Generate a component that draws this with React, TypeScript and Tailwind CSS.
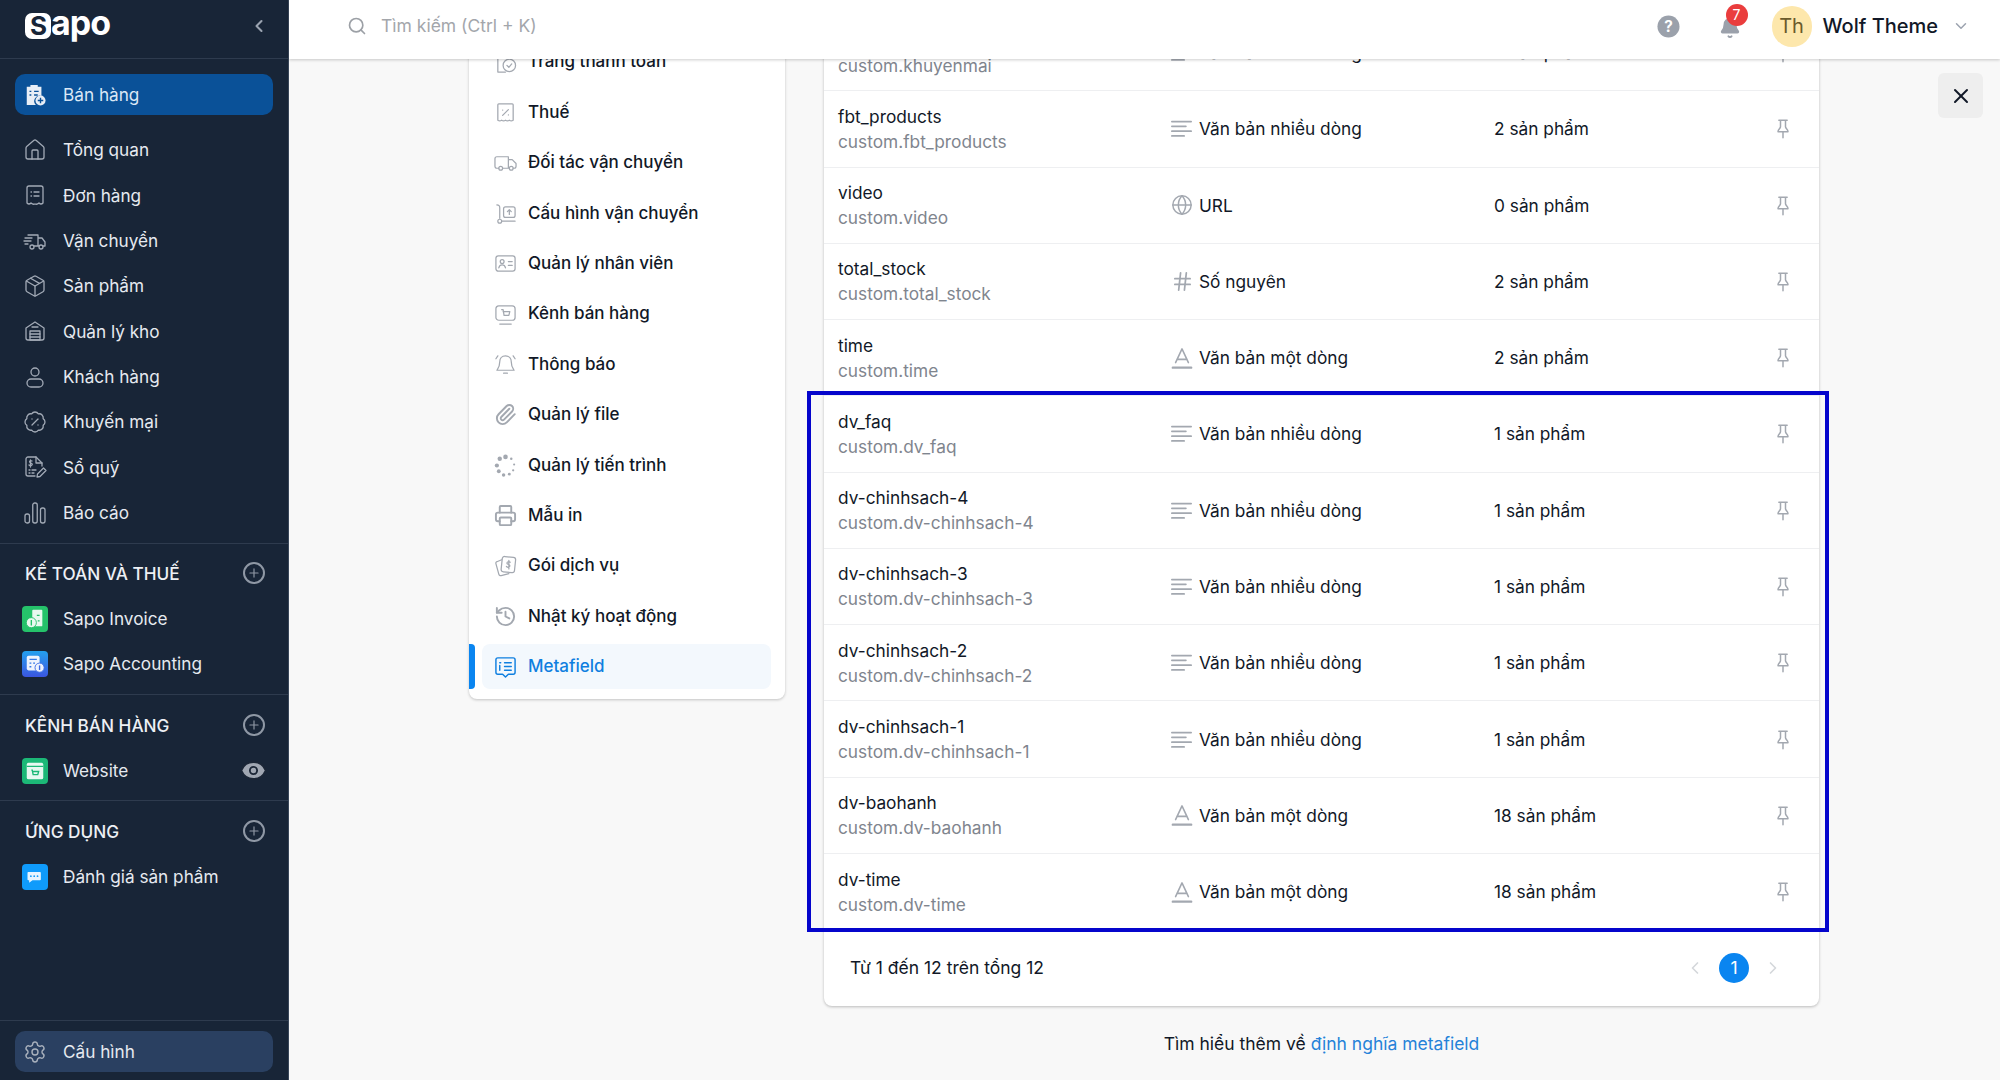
import React from "react";
import { BadgePercent, ChevronDown, ChevronLeft, ChevronRight, Eye, Globe, Hash, House, Package, Plus, Printer, Search, Settings, X, History, Paperclip, Bell } from "lucide-react";

type P = { className?: string };
const S = ({ className, children, sw = 1.3 }: P & { children: React.ReactNode; sw?: number }) => (
  <svg viewBox="0 0 24 24" fill="none" stroke="currentColor" strokeWidth={sw} strokeLinecap="round" strokeLinejoin="round" className={className}>{children}</svg>
);
const Receipt = (p: P) => <S {...p}><path d="M4 5a2 2 0 0 1 2-2h12a2 2 0 0 1 2 2v15c-1.5 1.5-2.5 1.5-4 0-1.5 1.5-2.500 1.500-4 1-1.500.5-2.500.5-4-1-1.500 1.500-2.500 1.500-4 0z" /><path d="M8 9h.5M11 9h5M8 13h.5M11 13h5" /></S>;
const FastTruck = (p: P) => <S {...p}><path d="M5 6h10v11h-4M15 9h4l3 4v4h-2M15 17h1" /><circle cx="9" cy="18" r="2" /><circle cx="18" cy="18" r="2" /><path d="M2 9h7M1 12h7M2 15h3" /></S>;
const Store = (p: P) => <S {...p}><path d="M3 9l9-6 9 6v10a2 2 0 0 1-2 2H5a2 2 0 0 1-2-2z" /><rect x="7" y="12" width="10" height="9" /><path d="M7 15h10M7 18h10M9 8h6" /></S>;
const Person = (p: P) => <S {...p}><circle cx="12" cy="7" r="4" /><rect x="4" y="14" width="16" height="8" rx="4" /></S>;
const Cash = (p: P) => <S {...p}><path d="M12 21H5a2 2 0 0 1-2-2V4a2 2 0 0 1 2-2h8l6 6v3" /><path d="M13 2v6h6M9 6c-2-1-3 .5-2 1.500s3 1 2 2.500-2.500.5-3 0M7.500 5v7M6 15h1M9 15h4M6 18h1M9 18h2" /><path d="M14 22l.5-3 6-6 2.500 2.500-6 6z" /></S>;
const Bars = (p: P) => <S {...p}><rect x="2" y="13" width="4.500" height="9" rx="2" /><rect x="9.750" y="2" width="4.500" height="20" rx="2" /><rect x="17.500" y="7" width="4.500" height="15" rx="2" /></S>;
const ThanhToan = (p: P) => <S {...p}><path d="M12 22H4V4" /><circle cx="16" cy="15" r="6.500" /><path d="M13.500 15l2 2 3-3.500" /></S>;
const Tax = (p: P) => <S {...p}><path d="M4 4a1 1 0 0 1 1-1h14a1 1 0 0 1 1 1v16c-1.500 1-2.500 1-4 0-1.500 1-2.500 1-4 0-1.500 1-2.500 1-4 0-1.500 1-2.500 1-4 0z" /><path d="M9 15l6-6M9 9.500h.1M15 14.500h.1" /></S>;
const Truck2 = (p: P) => <S {...p}><path d="M5 18H3a2 2 0 0 1-2-2V8a2 2 0 0 1 2-2h12v12H9M15 9h4l4 4v3a2 2 0 0 1-2 2h-1M15 18h1" /><circle cx="7" cy="18" r="2" /><circle cx="18" cy="18" r="2" /></S>;
const Cart = (p: P) => <S {...p}><path d="M3 3c2 0 3 1 3 3v11" /><circle cx="6" cy="20" r="2" /><path d="M8 20h14" /><rect x="10" y="5" width="12" height="11" rx="2" /><path d="M16 13V8M14 10l2-2 2 2" /></S>;
const IdCard = (p: P) => <S {...p}><rect x="2" y="4" width="20" height="16" rx="2.500" /><circle cx="8.500" cy="10" r="2" /><path d="M5 16.500c.5-2 2-3 3.500-3s3 1 3.500 3M15 10h4M15 14h4" /></S>;
const Monitor = (p: P) => <S {...p}><rect x="2" y="3" width="20" height="15" rx="3" /><path d="M6 22h12M8 7h1.500l1 6h5l1-4h-7" /></S>;
const BellO = (p: P) => <S {...p}><path d="M12 3c4 0 6 3 6 6 0 5 1 6 3 9H3c2-3 3-4 3-9 0-3 2-6 6-6zM10 21h4M4 3L2 6M20 3l2 3" /></S>;
const Spinner = (p: P) => (
  <svg viewBox="0 0 24 24" fill="currentColor" className={p.className}><circle cx="12" cy="3" r="2.400" /><circle cx="18" cy="5" r="1.300" /><circle cx="21" cy="11" r="1.100" /><circle cx="20" cy="17" r="1.200" /><circle cx="16" cy="21" r="1.500" /><circle cx="10" cy="22" r="1.800" /><circle cx="5" cy="18" r="2" /><circle cx="3" cy="12" r="2.200" /><circle cx="6" cy="5" r="2.300" /></svg>
);
const Plans = (p: P) => <S {...p}><rect x="8" y="2" width="14" height="16" rx="2.500" transform="rotate(6 15 10)" /><path d="M8 5L3 7a1.500 1.500 0 0 0-1 2l3 11a2 2 0 0 0 2.500 1.500l8-2" /><path d="M17 7.500c-1.500-1-3.500-.5-3.500 1s3.500 1 3 3-2.500 1.500-3.500.5M15.500 5.500v9" /></S>;
const MetaI = (p: P) => <S {...p} sw={1.500}><path d="M4 3h16a2 2 0 0 1 2 2v13a2 2 0 0 1-2 2h-5l-3 3-3-3H4a2 2 0 0 1-2-2V5a2 2 0 0 1 2-2z" /><path d="M6 8h1M6 11v5M11 8h7M11 12h7M11 16h7" /></S>;
const Lines = (p: P) => <S {...p} sw={2}><path d="M1 4h22M1 9.500h16M1 15h22M1 20.500h14" /></S>;
const AType = (p: P) => <S {...p} sw={1.700}><path d="M5 17L12 2l7 15M6.500 13.500h11" /><path strokeWidth={2.600} d="M2 22.500h20" /></S>;
const ThickPin = (p: P) => <S {...p} sw={1.800}><path d="M7 2h10M9 2v8c0 2-3 3-3 6h12c0-3-3-4-3-6V2M12 16v7" /></S>;

const side: [string, (p: P) => React.ReactNode][] = [
  ["Tổng quan", House], ["Đơn hàng", Receipt], ["Vận chuyển", FastTruck], ["Sản phẩm", Package], ["Quản lý kho", Store],
  ["Khách hàng", Person], ["Khuyến mại", BadgePercent], ["Sổ quỹ", Cash], ["Báo cáo", Bars],
];
const settings: [string, (p: P) => React.ReactNode][] = [
  ["Trang thanh toán", ThanhToan], ["Thuế", Tax], ["Đối tác vận chuyển", Truck2], ["Cấu hình vận chuyển", Cart], ["Quản lý nhân viên", IdCard],
  ["Kênh bán hàng", Monitor], ["Thông báo", BellO], ["Quản lý file", Paperclip], ["Quản lý tiến trình", Spinner], ["Mẫu in", Printer],
  ["Gói dịch vụ", Plans], ["Nhật ký hoạt động", History],
];
const ML = "Văn bản nhiều dòng", SL = "Văn bản một dòng";
const rows: [string, string, string, string][] = [
  ["khuyenmai", "custom.khuyenmai", ML, "0 sản phẩm"],
  ["fbt_products", "custom.fbt_products", ML, "2 sản phẩm"],
  ["video", "custom.video", "URL", "0 sản phẩm"],
  ["total_stock", "custom.total_stock", "Số nguyên", "2 sản phẩm"],
  ["time", "custom.time", SL, "2 sản phẩm"],
  ["dv_faq", "custom.dv_faq", ML, "1 sản phẩm"],
  ["dv-chinhsach-4", "custom.dv-chinhsach-4", ML, "1 sản phẩm"],
  ["dv-chinhsach-3", "custom.dv-chinhsach-3", ML, "1 sản phẩm"],
  ["dv-chinhsach-2", "custom.dv-chinhsach-2", ML, "1 sản phẩm"],
  ["dv-chinhsach-1", "custom.dv-chinhsach-1", ML, "1 sản phẩm"],
  ["dv-baohanh", "custom.dv-baohanh", SL, "18 sản phẩm"],
  ["dv-time", "custom.dv-time", SL, "18 sản phẩm"],
];
const TypeIcon = ({ t }: { t: string }) => {
  if (t === ML) return <Lines className="w-[21px] h-[21px] text-[#a3a8b0]" />;
  if (t === SL) return <AType className="w-[22px] h-[22px] text-[#a3a8b0]" />;
  if (t === "URL") return <Globe className="w-[22px] h-[22px] text-[#a3a8b0]" strokeWidth={1.600} />;
  return <Hash className="w-[23px] h-[23px] text-[#a3a8b0]" strokeWidth={1.800} />;
};

const Row = ({ label, icon: I }: { label: string; icon: (p: P & { strokeWidth?: number }) => React.ReactNode }) => (
  <div className="h-[45.330px] flex items-center">
    <span className="w-[63px] pl-[23px] shrink-0"><I className="w-[24px] h-[24px] text-[#a2aab6]" strokeWidth={1.300} /></span>
    <span>{label}</span>
  </div>
);
const Section = ({ title }: { title: string }) => (
  <div className="flex items-center justify-between pl-[25px] pr-[23px] h-[30px] font-medium text-[#edf0f4]">
    <span>{title}</span>
    <span className="w-[22px] h-[22px] rounded-full border-2 border-[#8f98a5] flex items-center justify-center"><Plus className="w-[14px] h-[14px] text-[#8f98a5]" strokeWidth={2} /></span>
  </div>
);
const Tile = ({ className, children }: { className: string; children: React.ReactNode }) => (
  <span className={`w-[26px] h-[26px] rounded-[4px] flex items-center justify-center ${className}`}>{children}</span>
);
const AppRow = ({ label, tile, children }: { label: string; tile: string; children: React.ReactNode }) => (
  <div className="h-[45px] flex items-center">
    <span className="w-[63px] pl-[22px] shrink-0"><Tile className={tile}>{children}</Tile></span>
    <span>{label}</span>
  </div>
);

export default function App() {
  return (
    <div className="relative w-[2000px] h-[1080px] flex overflow-hidden bg-[#f8f8f8] text-[17.500px] text-[#111827]" style={{ fontFamily: "Inter, sans-serif" }}>
      <aside className="w-[289px] shrink-0 bg-[#182537] text-[#e6eaf0] text-[17.200px] flex flex-col border-r border-[#39475a]">
        <div className="h-[59px] shrink-0 flex items-center justify-between pl-[25px] pr-[19px] pb-[7px] border-b border-[#2e3b4e]">
          <div className="flex items-center text-white font-bold text-[34px] leading-none tracking-[-1px]">
            <span className="w-[26px] h-[26px] bg-white rounded-[7px] text-[#182537] text-[26px] flex items-center justify-center">S</span>
            <span className="-mt-[5px]">apo</span>
          </div>
          <ChevronLeft className="w-[20px] h-[20px] text-[#9aa3b0]" strokeWidth={2.500} />
        </div>
        <div className="mx-[15px] mt-[15px] mb-[12.500px] h-[41px] rounded-[10px] bg-[#0a5198] flex items-center shrink-0">
          <span className="w-[48px] pl-[9px] shrink-0">
            <svg viewBox="0 0 24 24" className="w-[22px] h-[24px]"><path fill="#e8eef6" d="M3 3h4V1h8v2h4v10a6 6 0 0 0-6 10H3z" /><circle cx="18" cy="18" r="5.500" fill="#e8eef6" /><path stroke="#0a5198" strokeWidth="1.500" d="M18 15v6M15 18h6M6 8h2M6 12h2M11 8h5M11 12h4" /></svg>
          </span>
          <span className="text-[#dbe8f6]">Bán hàng</span>
        </div>
        {side.map(([l, I]) => <Row key={l} label={l} icon={I as never} />)}
        <div className="border-t border-[#2e3b4e] mt-[8px] pt-[14px] pb-[2px]">
          <Section title="KẾ TOÁN VÀ THUẾ" />
          <div className="mt-[8px]">
            <AppRow label="Sapo Invoice" tile="bg-[#25c26a]">
              <svg viewBox="0 0 24 24" className="w-[22px] h-[22px]"><rect x="9" y="2" width="11" height="18" rx="1" fill="#e9f9ef" /><circle cx="8" cy="16" r="5.500" fill="#e9f9ef" stroke="#25c26a" /><path stroke="#25c26a" strokeWidth="1.500" d="M8 13v6M14 8h3M15 14h2" /></svg>
            </AppRow>
            <AppRow label="Sapo Accounting" tile="bg-gradient-to-b from-[#22a0ee] to-[#3a55e0]">
              <svg viewBox="0 0 24 24" className="w-[22px] h-[22px]"><rect x="3" y="3" width="14" height="16" rx="2" fill="#eef3fd" /><path stroke="#3478e6" strokeWidth="1.500" d="M6 7h8M6 11h2M6 15h2M10 11h2" /><circle cx="17" cy="16" r="5" fill="#eef3fd" stroke="#3a6ae6" /><path stroke="#3a6ae6" strokeWidth="1.500" d="M17 13.500v5" /></svg>
            </AppRow>
          </div>
        </div>
        <div className="border-t border-[#2e3b4e] mt-[6px] pt-[15px]">
          <Section title="KÊNH BÁN HÀNG" />
          <div className="mt-[8px] flex items-center justify-between pr-[20px]">
            <AppRow label="Website" tile="bg-[#1cb877]">
              <svg viewBox="0 0 24 24" className="w-[22px] h-[22px]"><rect x="3" y="3" width="18" height="18" rx="2" fill="#e8f8f1" /><path stroke="#1cb877" strokeWidth="1.500" fill="none" d="M3 7h18M8 11h1l1 5h5l1-3.500H9.500" /></svg>
            </AppRow>
            <Eye className="w-[29px] h-[29px] text-[#1b2636] fill-[#a0a7b2]" strokeWidth={1.500} />
          </div>
        </div>
        <div className="border-t border-[#2e3b4e] mt-[7px] pt-[15px]">
          <Section title="ỨNG DỤNG" />
          <div className="mt-[8px]">
            <AppRow label="Đánh giá sản phẩm" tile="bg-[#0f9bfb]">
              <svg viewBox="0 0 24 24" className="w-[20px] h-[20px]"><path fill="#e6f4ff" d="M4 6h14a1 1 0 0 1 1 1v8a1 1 0 0 1-1 1h-9l-4 3v-3H4a1 1 0 0 1-1-1V7a1 1 0 0 1 1-1z" /><path stroke="#0f9bfb" strokeWidth="2" strokeLinecap="round" d="M7 11h.1M11 11h.1M15 11h.1" /></svg>
            </AppRow>
          </div>
        </div>
        <div className="mt-auto border-t border-[#2e3b4e] h-[60px] shrink-0 pt-[10px]">
          <div className="mx-[15px] h-[41px] rounded-[10px] bg-[#2a4061] flex items-center">
            <span className="w-[48px] pl-[8px] shrink-0"><Settings className="w-[24px] h-[24px] text-[#a9b1bd]" strokeWidth={1.400} /></span>
            <span>Cấu hình</span>
          </div>
        </div>
      </aside>

      <div className="flex-1 min-w-0 flex flex-col">
        <header className="relative z-10 h-[59px] shrink-0 bg-white shadow-[0_1px_3px_rgba(0,0,0,0.2)] flex items-center pl-[58px] pr-[30px] pb-[7px]">
          <Search className="w-[20px] h-[20px] text-[#9ca0a6]" strokeWidth={2} />
          <span className="ml-[14px] text-[#a3a6ab]">Tìm kiếm (Ctrl + K)</span>
          <svg viewBox="0 0 24 24" className="ml-auto w-[23px] h-[23px]"><circle cx="12" cy="12" r="11.500" fill="#9ba1ab" /><text x="12" y="17.500" textAnchor="middle" fontSize="16" fontWeight="700" fill="#fff">?</text></svg>
          <span className="relative ml-[39px] mt-[3px] mr-[31px]">
            <Bell className="w-[22px] h-[22px] text-[#9ba1ab] fill-[#9ba1ab]" />
            <span className="absolute -top-[13px] left-[7px] w-[22px] h-[22px] rounded-full bg-[#ea3d3d] text-white text-[14px] flex items-center justify-center">7</span>
          </span>
          <span className="w-[40px] h-[41px] rounded-full bg-[#fde7ac] text-[#6b5a2b] text-[20px] flex items-center justify-center">Th</span>
          <span className="ml-[11px] font-medium text-[20px]">Wolf Theme</span>
          <ChevronDown className="ml-[14px] w-[18px] h-[18px] text-[#9ca3af]" />
        </header>

        <main className="flex-1 min-h-0 overflow-hidden flex items-start pl-[180px]">
          <div className="w-[316px] shrink-0 -mt-[29px] bg-white rounded-[8px] shadow-[0_1px_3px_rgba(0,0,0,0.22)] pt-[7px] pb-[7px] font-medium text-[17px]">
            {settings.map(([l, I]) => (
              <div key={l} className="h-[50.400px] flex items-center pl-[25px]">
                <I className="w-[23px] h-[23px] text-[#a3a8b0] shrink-0" />
                <span className="ml-[11px]">{l}</span>
              </div>
            ))}
            <div className="relative h-[50.400px] flex items-center">
              <span className="w-[6px] h-[45px] rounded-r-[4px] bg-[#0a85f0] shrink-0" />
              <div className="ml-[7px] w-[289px] h-[45px] rounded-[8px] bg-[#f3f8fd] flex items-center pl-[12px] text-[#0f7fe0]">
                <MetaI className="w-[23px] h-[23px] shrink-0" />
                <span className="ml-[11px]">Metafield</span>
              </div>
            </div>
          </div>

          <div className="w-[995px] shrink-0 ml-[39px] -mt-[44px]">
            <div className="bg-white rounded-[8px] shadow-[0_1px_3px_rgba(0,0,0,0.25)] text-[17.300px]">
              {rows.map(([n, k, t, c]) => (
                <div key={n} className="h-[76.270px] border-b border-[#eeeff1] flex items-center pl-[14px] pr-[26px]">
                  <div className="w-[333px] shrink-0 leading-[25px]">
                    <div>{n}</div>
                    <div className="text-[#7f858e]">{k}</div>
                  </div>
                  <span className="w-[28px] shrink-0 flex"><TypeIcon t={t} /></span>
                  <span className="w-[295px] shrink-0 pt-[1px]">{t}</span>
                  <span className="pt-[1px]">{c}</span>
                  <ThickPin className="ml-auto w-[20px] h-[21px] text-[#a3a8b0]" />
                </div>
              ))}
              <div className="h-[76px] flex items-center pl-[26px] pr-[36px] text-[17.500px]">
                <span>Từ 1 đến 12 trên tổng 12</span>
                <ChevronLeft className="ml-auto w-[20px] h-[20px] text-[#d4d7db]" />
                <span className="mx-[14px] w-[30px] h-[30px] rounded-full bg-[#0a85f0] text-white flex items-center justify-center">1</span>
                <ChevronRight className="w-[20px] h-[20px] text-[#d4d7db]" />
              </div>
            </div>
            <div className="mt-[25px] text-center">
              Tìm hiểu thêm về <span className="text-[#2582d8]">định nghĩa metafield</span>
            </div>
          </div>

          <button className="ml-[119px] mt-[14px] w-[45px] h-[45px] rounded-[6px] bg-[#eeeeee] flex items-center justify-center shrink-0">
            <X className="w-[24px] h-[24px] text-[#111827]" />
          </button>
        </main>
      </div>

      <div className="absolute left-[807px] top-[391px] w-[1022px] h-[541px] border-4 border-[#0505cc] pointer-events-none" />
    </div>
  );
}
